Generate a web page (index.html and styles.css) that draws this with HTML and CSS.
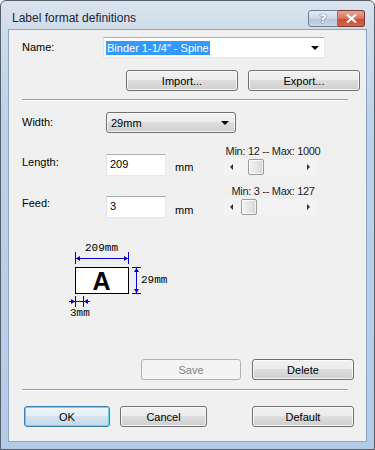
FILE: index.html
```html
<!DOCTYPE html>
<html>
<head>
<meta charset="utf-8">
<link rel="stylesheet" href="styles.css">
</head>
<body>
<div class="window">
  <div class="titlebar">
    <span class="title">Label format definitions</span>
    <div class="tbtns">
      <span class="tb help">?</span>
      <span class="tb close"><svg width="11" height="9" viewBox="0 0 11 9"><path d="M1 0.5 L10 8.5 M10 0.5 L1 8.5" stroke="#fff" stroke-width="2.2"/></svg></span>
    </div>
  </div>
  <div class="client">
    <div class="row row-name">
      <span class="lbl lbl-name">Name:</span>
      <div class="combo-edit">
        <span class="sel">Binder 1-1/4" - Spine</span>
        <span class="arrow"></span>
      </div>
    </div>
    <div class="row row-io">
      <button class="btn btn-io">Import...</button>
      <button class="btn btn-io">Export...</button>
    </div>
    <div class="sep"></div>
    <div class="row row-width">
      <span class="lbl lbl-wide">Width:</span>
      <div class="combo-list">
        <span>29mm</span>
        <span class="arrow"></span>
      </div>
    </div>
    <div class="row row-len">
      <span class="lbl lbl-wide lbl-len">Length:</span>
      <div class="textbox tb-len">209</div>
      <span class="unit unit-len">mm</span>
      <div class="scale">
        <div class="scale-text">Min: 12 -- Max: 1000</div>
        <div class="scrollbar">
          <span class="sb-left"></span>
          <span class="thumb thumb-len"></span>
          <span class="sb-right"></span>
        </div>
      </div>
    </div>
    <div class="row row-feed">
      <span class="lbl lbl-wide lbl-feed">Feed:</span>
      <div class="textbox tb-feed">3</div>
      <span class="unit unit-feed">mm</span>
      <div class="scale">
        <div class="scale-text">Min: 3 -- Max: 127</div>
        <div class="scrollbar">
          <span class="sb-left"></span>
          <span class="thumb thumb-feed"></span>
          <span class="sb-right"></span>
        </div>
      </div>
    </div>
    <svg class="diagram" width="120" height="85" viewBox="0 0 120 85">
      <g fill="#000" font-family="Liberation Mono, monospace" font-size="11">
        <text x="23" y="14">209mm</text>
        <text x="79" y="46">29mm</text>
        <text x="8" y="79">3mm</text>
      </g>
      <g stroke="#0000c8" stroke-width="1" fill="none">
        <path d="M13 21.5 H67 M13.5 15 V27 M66.5 15 V27"/>
        <path d="M74.5 30 V57 M70 30.5 H79 M70 56.5 H79"/>
        <path d="M7 64.5 H28 M13.5 59 V70 M21.5 59 V70"/>
      </g>
      <g fill="#0000c8">
        <path d="M14 21.5 L18 19 L18 24 Z"/>
        <path d="M66 21.5 L62 19 L62 24 Z"/>
        <path d="M74.5 31 L72 35 L77 35 Z"/>
        <path d="M74.5 56 L72 52 L77 52 Z"/>
        <path d="M13 64.5 L9 62 L9 67 Z"/>
        <path d="M22 64.5 L26 62 L26 67 Z"/>
      </g>
      <rect x="13.5" y="30.5" width="53" height="26" fill="#fff" stroke="#000"/>
      <text x="39.5" y="52.5" text-anchor="middle" font-family="Liberation Sans, Arial, sans-serif" font-weight="bold" font-size="25" fill="#000">A</text>
    </svg>
    <div class="row row-save">
      <button class="btn btn-save" disabled>Save</button>
      <button class="btn btn-del">Delete</button>
    </div>
    <div class="sep sep2"></div>
    <div class="row row-ok">
      <button class="btn btn-ok">OK</button>
      <button class="btn btn-cancel">Cancel</button>
      <button class="btn btn-default">Default</button>
    </div>
  </div>
</div>
</body>
</html>
```

FILE: styles.css
```css
html, body {
  margin: 0;
  padding: 0;
  background: #ffffff;
}
.window {
  width: 375px;
  height: 450px;
  box-sizing: border-box;
  border: 1px solid #555f6c;
  border-radius: 6px 6px 0 0;
  background: linear-gradient(to bottom, #dae4ef 0px, #cfdcea 28px, #bcd2ea 120px, #b3cbe7 100%);
  font-family: "Liberation Sans", Arial, sans-serif;
  font-size: 11px;
  color: #000;
  display: flex;
  flex-direction: column;
}
.titlebar {
  height: 28px;
  display: flex;
  align-items: flex-start;
}
.title {
  font-family: "Liberation Sans", Arial, sans-serif;
  font-size: 12px;
  color: #1a2433;
  margin: 10px 0 0 11px;
  line-height: 14px;
}
.tbtns {
  margin-left: auto;
  margin-right: 9px;
  margin-top: 9px;
  display: flex;
}
.tb {
  height: 15px;
  border: 1px solid #6d7c8f;
  display: flex;
  align-items: center;
  justify-content: center;
  box-sizing: content-box;
}
.help {
  width: 28px;
  border-radius: 3px 0 0 3px;
  background: linear-gradient(to bottom, #e3ebf4 0%, #c9d7e7 50%, #b3c6dc 51%, #c4d6ea 100%);
  font-family: "DejaVu Sans", sans-serif;
  font-size: 13px;
  font-weight: bold;
  color: #ffffff;
  text-shadow: 0 0 1px #3c4f68, 0 0 1px #3c4f68;
  line-height: 15px;
}
.close {
  width: 26px;
  border-left: none;
  border-color: #7a3a32;
  border-radius: 0 3px 3px 0;
  background: linear-gradient(to bottom, #e8a493 0%, #d8735e 50%, #c74a30 51%, #d7644a 100%);
}
.client {
  margin: 0 7px 7px 7px;
  flex: 1;
  background: #f0f0f0;
  border: 1px solid #8ea4be;
  padding: 7px 0 0 13px;
}
.row {
  display: flex;
}
.lbl {
  line-height: 13px;
}
.row-name {
  align-items: center;
  height: 21px;
}
.lbl-name {
  width: 81px;
}
.combo-edit {
  width: 222px;
  height: 21px;
  box-sizing: border-box;
  background: #fff;
  border: 1px solid #abadb3;
  border-right-color: #e3e9ef;
  border-bottom-color: #e3e9ef;
  border-left-color: #e2e3ea;
  display: flex;
  align-items: center;
  padding-left: 2px;
}
.sel {
  background: #3399ff;
  color: #fff;
  line-height: 14px;
  padding: 0 1px;
}
.arrow {
  margin-left: auto;
  margin-right: 5px;
  width: 0;
  height: 0;
  border-left: 4px solid transparent;
  border-right: 4px solid transparent;
  border-top: 4px solid #000;
}
.row-io {
  margin-top: 12px;
  padding-left: 104px;
  gap: 10px;
}
.btn {
  font-family: "Liberation Sans", Arial, sans-serif;
  font-size: 11px;
  color: #000;
  height: 21px;
  box-sizing: border-box;
  padding: 0;
  border: 1px solid #707070;
  border-radius: 3px;
  background: linear-gradient(to bottom, #f2f2f2 0%, #ebebeb 49%, #dddddd 50%, #cfcfcf 100%);
  box-shadow: inset 0 0 0 1px rgba(255, 255, 255, 0.75);
}
.btn-io {
  width: 112px;
}
.sep {
  margin-top: 8px;
  width: 326px;
  height: 0;
  border-top: 1px solid #a0a0a0;
  border-bottom: 1px solid #ffffff;
}
.row-width {
  margin-top: 11px;
  align-items: center;
}
.lbl-wide {
  width: 84px;
}
.combo-list {
  width: 130px;
  height: 21px;
  box-sizing: border-box;
  border: 1px solid #707070;
  border-radius: 3px;
  background: linear-gradient(to bottom, #f2f2f2 0%, #ebebeb 49%, #dddddd 50%, #cfcfcf 100%);
  box-shadow: inset 0 0 0 1px rgba(255, 255, 255, 0.75);
  display: flex;
  align-items: center;
  padding-left: 4px;
}
.combo-list .arrow {
  margin-right: 6px;
}
.row-len {
  margin-top: 12px;
  align-items: flex-start;
}
.lbl-len {
  margin-top: 11px;
}
.textbox {
  width: 60px;
  height: 22px;
  box-sizing: border-box;
  background: #fff;
  border: 1px solid #abadb3;
  border-right-color: #e3e9ef;
  border-bottom-color: #e3e9ef;
  border-left-color: #e2e3ea;
  padding: 3px 0 0 3px;
  line-height: 13px;
}
.tb-len {
  margin-top: 9px;
}
.unit {
  width: 58px;
  box-sizing: border-box;
  padding-left: 9px;
  line-height: 13px;
}
.unit-len {
  margin-top: 16px;
}
.scale {
  width: 98px;
}
.scale-text {
  text-align: center;
  line-height: 13px;
  color: #222;
  white-space: nowrap;
  letter-spacing: -0.3px;
  margin: 0 -6px;
}
.scrollbar {
  margin-top: 1px;
  width: 93px;
  height: 16px;
  background: #f3f3f3;
  display: flex;
  align-items: center;
}
.sb-left {
  margin-left: 6px;
  width: 0;
  height: 0;
  border-top: 3px solid transparent;
  border-bottom: 3px solid transparent;
  border-right: 3px solid #333;
}
.sb-right {
  margin-left: auto;
  margin-right: 7px;
  width: 0;
  height: 0;
  border-top: 3px solid transparent;
  border-bottom: 3px solid transparent;
  border-left: 3px solid #333;
}
.thumb {
  width: 16px;
  height: 16px;
  box-sizing: border-box;
  border: 1px solid #9b9b9b;
  border-radius: 2px;
  background: linear-gradient(to right, #f4f4f4 0%, #e6e6e6 50%, #d6d6d6 100%);
  box-shadow: inset 0 0 0 1px rgba(255, 255, 255, 0.7);
}
.thumb-len {
  margin-left: 15px;
}
.thumb-feed {
  margin-left: 8px;
}
.row-feed {
  margin-top: 9px;
  align-items: flex-start;
}
.lbl-feed {
  margin-top: 12px;
}
.tb-feed {
  margin-top: 11px;
}
.unit-feed {
  margin-top: 19px;
}
.diagram {
  display: block;
  margin: 19px 0 0 40px;
}
.row-save {
  margin-top: 37px;
  padding-left: 119px;
  gap: 11px;
}
.btn-save {
  width: 100px;
  border-color: #adb2b5;
  background: #f4f4f4;
  color: #838383;
  box-shadow: none;
}
.btn-del {
  width: 102px;
}
.sep2 {
  margin-top: 9px;
}
.row-ok {
  margin-top: 15px;
  padding-left: 2px;
}
.btn-ok {
  width: 86px;
  border-color: #3c7fb1;
  background: linear-gradient(to bottom, #eef6fb 0%, #e3eef6 49%, #d3e3ef 50%, #c6dae9 100%);
  box-shadow: inset 0 0 0 1px #5fd4f5;
}
.btn-cancel {
  width: 87px;
  margin-left: 10px;
}
.btn-default {
  width: 102px;
  margin-left: 45px;
}
```
